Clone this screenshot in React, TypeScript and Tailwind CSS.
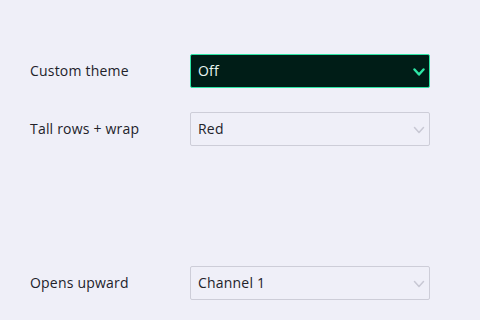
const Chevron = ({ active }: { active?: boolean }) => (
  <svg
    width="12"
    height="8"
    viewBox="0 0 12 8"
    fill="none"
    className={active ? 'text-[#2ee6a6]' : 'text-[#c8c8d4]'}
  >
    <path
      d="M1.5 1.5 L6 6.5 L10.5 1.5"
      stroke="currentColor"
      strokeWidth={active ? 2.4 : 1.5}
      strokeLinecap="round"
      strokeLinejoin="round"
    />
  </svg>
)

const SelectRow = ({ label, value, active, className }: { label: string; value: string; active?: boolean; className?: string }) => (
  <div className={`flex items-center ${className ?? ''}`}>
    <span className="w-[160px] text-[14px] leading-none tracking-[0.2px] text-[#22222a]">{label}</span>
    <div
      className={
        active
          ? 'flex h-[34px] w-[240px] items-center justify-between rounded-[2px] border border-[#2ee6a6] bg-[#001d17] pl-[7px] pr-[4px] text-[14px] leading-none tracking-[0.2px] text-[#e8f5f0]'
          : 'flex h-[34px] w-[240px] items-center justify-between rounded-[2px] border border-[#cdcdd8] bg-[#efeff8] pl-[7px] pr-[4px] text-[14px] leading-none tracking-[0.2px] text-[#22222a]'
      }
    >
      <span>{value}</span>
      <span className="pt-[1px]">
        <Chevron active={active} />
      </span>
    </div>
  </div>
)

export default function App() {
  return (
    <div className="h-[320px] w-[480px] bg-[#efeff8] px-[30px] pt-[54px] font-['Open_Sans',sans-serif]">
      <SelectRow label="Custom theme" value="Off" active />
      <SelectRow label="Tall rows + wrap" value="Red" className="mt-[24px]" />
      <SelectRow label="Opens upward" value="Channel 1" className="mt-[120px]" />
    </div>
  )
}
